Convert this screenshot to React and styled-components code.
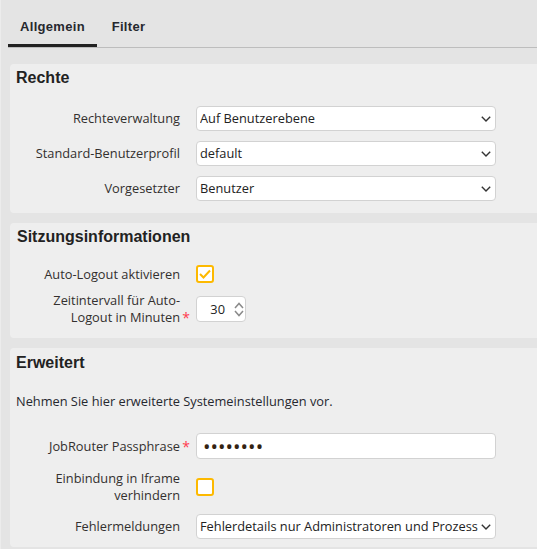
import React from 'react';
import styled, { createGlobalStyle } from 'styled-components';

const GlobalStyle = createGlobalStyle`
  html, body {
    margin: 0;
    padding: 0;
    background: #e4e4e4;
    overflow: hidden;
  }
  * {
    box-sizing: border-box;
  }
`;

const Page = styled.div`
  width: 537px;
  height: 549px;
  overflow: hidden;
  background: #e4e4e4;
  border-left: 1px solid #ececec;
  font-family: 'Open Sans', sans-serif;
  font-size: 12.8px;
  color: #2b2b2b;
`;

const Tabs = styled.div`
  display: flex;
  height: 48px;
  margin-left: 7px;
  border-bottom: 1px solid #bdbdbd;
`;

const Tab = styled.div`
  width: ${(p) => p.$width}px;
  padding-top: 19px;
  text-align: center;
  font-family: 'Liberation Sans', Arial, sans-serif;
  font-size: 13px;
  font-weight: 700;
  letter-spacing: 0.3px;
  color: #26282e;
  height: 47px;
  border-bottom: ${(p) => (p.$active ? '3px solid #222' : 'none')};
`;

const Panels = styled.div`
  display: flex;
  flex-direction: column;
  gap: 10px;
  margin: 16px 0 0 9px;
`;

const Panel = styled.section`
  background: #eeeeee;
  border-radius: 4px 0 0 4px;
  height: ${(p) => p.$height}px;
  padding: ${(p) => p.$pad || 5}px 0 0 ${(p) => p.$indent || 6}px;
`;

const Heading = styled.h2`
  margin: 0;
  font-family: 'Liberation Sans', Arial, sans-serif;
  font-size: 16px;
  line-height: 18px;
  font-weight: 700;
  color: #222;
`;

const Intro = styled.p`
  margin: 20px 0 0;
  line-height: 18px;
  color: #26282e;
`;

const Form = styled.div`
  display: flex;
  flex-direction: column;
  margin-top: ${(p) => p.$top}px;
  margin-left: ${(p) => (p.$indent ? p.$indent : 0)}px;
`;

const Row = styled.div`
  display: grid;
  grid-template-columns: 158px 300px;
  column-gap: 16px;
  align-items: center;
  margin-bottom: ${(p) => p.$gap ?? 10}px;
`;

const Label = styled.label`
  position: relative;
  justify-self: end;
  text-align: right;
  line-height: 17px;
  color: #33302f;
`;

const Required = styled.span`
  position: absolute;
  right: -10px;
  bottom: 0;
  color: #ff3b4e;
  font-size: 14px;
`;

const SelectWrap = styled.div`
  position: relative;
  width: 300px;
  height: 25px;
`;

const Select = styled.select`
  appearance: none;
  display: block;
  width: 100%;
  height: 100%;
  padding: 0 17px 2px 3px;
  background: #fff;
  border: 1px solid #d2d2d2;
  border-radius: 4px;
  font-family: 'Open Sans', sans-serif;
  font-size: 12.8px;
  color: #222;
`;

const Chevron = styled.svg`
  position: absolute;
  top: 10px;
  right: 5px;
  pointer-events: none;
`;

const TextField = styled.input`
  width: 300px;
  height: 26px;
  padding: 0 6px;
  background: #fff;
  border: 1px solid #d2d2d2;
  border-radius: 4px;
  font-family: 'Open Sans', sans-serif;
  font-size: 20px;
  color: #332211;
`;

const Stepper = styled.div`
  display: flex;
  align-items: center;
  justify-content: flex-end;
  width: 50px;
  height: 26px;
  padding-right: 1px;
  background: #fff;
  border: 1px solid #d2d2d2;
  border-radius: 4px;
  color: #222;
`;

const StepperValue = styled.span`
  margin-right: 9px;
`;

const CheckBox = styled.span`
  display: flex;
  align-items: center;
  justify-content: center;
  width: 18px;
  height: 18px;
  background: #fff;
  border: 2px solid #fdb900;
  border-radius: 3px;
`;

const Spinner = () => (
  <svg width="10" height="15" viewBox="0 0 10 15" fill="none" stroke="#8a8a8a" strokeWidth="1.5">
    <path d="M1 6 5 1.5 9 6" />
    <path d="M1 9l4 4.5L9 9" />
  </svg>
);

const Check = () => (
  <svg width="12" height="10" viewBox="0 0 12 10" fill="none" stroke="#fdb900" strokeWidth="2">
    <path d="M1 5l3.5 3.5L11 1.5" />
  </svg>
);

const SelectField = ({ value }) => (
  <SelectWrap>
    <Select defaultValue={value}>
      <option>{value}</option>
    </Select>
    <Chevron width="10" height="6" viewBox="0 0 10 6" fill="none" stroke="#333" strokeWidth="1.4">
      <path d="M.8.8 5 5l4.2-4.2" />
    </Chevron>
  </SelectWrap>
);

const App = () => {
  return (
    <Page>
      <GlobalStyle />
      <Tabs>
        <Tab $active $width={89}>Allgemein</Tab>
        <Tab $width={63}>Filter</Tab>
      </Tabs>
      <Panels>
        <Panel $height={149}>
          <Heading>Rechte</Heading>
          <Form $top={19} $indent={6}>
            <Row>
              <Label>Rechteverwaltung</Label>
              <SelectField value="Auf Benutzerebene" />
            </Row>
            <Row>
              <Label>Standard-Benutzerprofil</Label>
              <SelectField value="default" />
            </Row>
            <Row>
              <Label>Vorgesetzter</Label>
              <SelectField value="Benutzer" />
            </Row>
          </Form>
        </Panel>
        <Panel $height={115} $indent={7}>
          <Heading>Sitzungsinformationen</Heading>
          <Form $top={19} $indent={5}>
            <Row $gap={9}>
              <Label>Auto-Logout aktivieren</Label>
              <CheckBox><Check /></CheckBox>
            </Row>
            <Row>
              <Label>
                Zeitintervall für Auto-Logout in Minuten
                <Required>*</Required>
              </Label>
              <Stepper>
                <StepperValue>30</StepperValue>
                <Spinner />
              </Stepper>
            </Row>
          </Form>
        </Panel>
        <Panel $height={199} $pad={6}>
          <Heading>Erweitert</Heading>
          <Intro>Nehmen Sie hier erweiterte Systemeinstellungen vor.</Intro>
          <Form $top={23} $indent={6}>
            <Row $gap={11}>
              <Label>
                JobRouter Passphrase
                <Required>*</Required>
              </Label>
              <TextField type="password" defaultValue="12345678" />
            </Row>
            <Row $gap={10}>
              <Label>Einbindung in Iframe verhindern</Label>
              <CheckBox />
            </Row>
            <Row>
              <Label>Fehlermeldungen</Label>
              <SelectField value="Fehlerdetails nur Administratoren und Prozessbeteiligten anzeigen" />
            </Row>
          </Form>
        </Panel>
      </Panels>
    </Page>
  );
};

export default App;
